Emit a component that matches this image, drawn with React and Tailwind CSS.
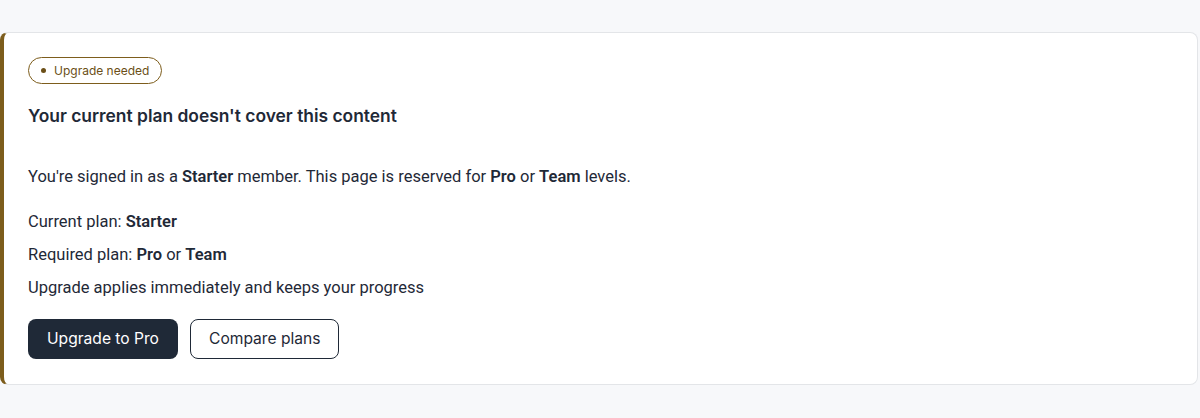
import React from "react";

const App = () => {
    return (
        <div className="min-h-screen bg-[#f7f8fa] pt-8 pr-[2px]" style={{ fontFamily: "Inter, 'Noto Sans', sans-serif" }}>
            <div className="bg-white border border-[#e3e5e8] border-l-4 border-l-[#7d5d1c] rounded-lg pl-6 pr-6 pt-6 pb-[25px]">
                <div className="flex">
                    <span className="inline-flex items-center gap-2 h-[27px] px-3 rounded-full border border-[#7d5d1c] text-[12px] text-[#6b4f17]">
                        <span className="w-[5px] h-[5px] rounded-full bg-[#6b4f17]"></span>
                        Upgrade needed
                    </span>
                </div>
                <h2 className="mt-[20px] text-[17.4px] leading-[24px] font-semibold text-[#1f2937]">
                    Your current plan doesn't cover this content
                </h2>
                <div className="font-['Roboto',sans-serif] text-[16.5px] leading-[22px] text-[#1f2937]">
                    <p className="mt-[38px]">
                        You're signed in as a <b className="font-semibold">Starter</b> member. This page is reserved for <b className="font-semibold">Pro</b> or <b className="font-semibold">Team</b> levels.
                    </p>
                    <div className="mt-[23px] flex flex-col gap-[11px]">
                        <p>Current plan: <b className="font-semibold">Starter</b></p>
                        <p>Required plan: <b className="font-semibold">Pro</b> or <b className="font-semibold">Team</b></p>
                        <p>Upgrade applies immediately and keeps your progress</p>
                    </div>
                </div>
                <div className="mt-[20px] flex gap-3">
                    <button className="h-10 px-[19px] rounded-lg bg-[#1f2937] text-white text-[15.6px] cursor-pointer">
                        Upgrade to Pro
                    </button>
                    <button className="h-10 px-[18px] rounded-lg bg-white border border-[#1f2937] text-[#1f2937] text-[15.6px] cursor-pointer">
                        Compare plans
                    </button>
                </div>
            </div>
        </div>
    );
};

export default App;
